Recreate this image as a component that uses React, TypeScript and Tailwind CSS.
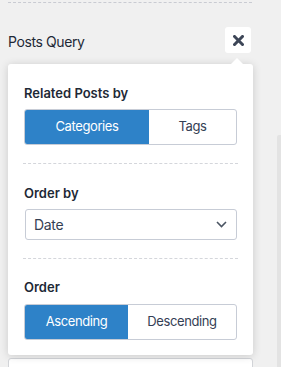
import React, { useState } from 'react';

const SEG = 'flex-1 h-full flex items-center justify-center text-[13px] tracking-[-0.4px]';

function Separator() {
  return <div className="-mx-px border-t border-dashed border-[#d4d6db]" />;
}

function Heading({ children }: { children: React.ReactNode }) {
  return <div className="text-[13px] leading-[16px] font-semibold text-[#1e2936]">{children}</div>;
}

export default function App() {
  const [relBy, setRelBy] = useState<'categories' | 'tags'>('categories');
  const [order, setOrder] = useState<'asc' | 'desc'>('asc');

  return (
    <div className="relative w-[281px] h-[367px] overflow-hidden bg-[#f0f0f0] font-['Inter',sans-serif]">
      <div className="ml-2 mt-[2px] w-[244px] border-t border-dashed border-[#c9cbd2]" />

      <div className="mt-6 ml-2 w-[243px] flex items-center justify-between">
        <span className="mt-[3px] text-[14px] tracking-[-0.4px] text-[#1e2936]">Posts Query</span>
        <button className="w-[26px] h-[26px] bg-white rounded-[3px] flex items-center justify-center">
          <svg width="11" height="11" viewBox="0 0 11 11">
            <path d="M1.5 1.5 L9.5 9.5 M9.5 1.5 L1.5 9.5" stroke="#3d4657" strokeWidth="3" strokeLinecap="square" />
          </svg>
        </button>
      </div>

      <div className="relative mt-[11px] ml-2 w-[245px] bg-white rounded-[3px] shadow-[0_1px_9px_rgba(0,0,0,0.16)] px-4 pt-[21px] pb-[15px]">
        <div className="absolute -top-[6px] left-[223px] w-0 h-0 border-l-[6px] border-r-[6px] border-b-[6px] border-l-transparent border-r-transparent border-b-white" />

        <Heading>Related Posts by</Heading>
        <div className="mt-2 h-[36px] flex rounded-[3px] border border-[#c7ccd6] overflow-hidden">
          <button onClick={() => setRelBy('categories')} className={SEG + (relBy === 'categories' ? ' bg-[#2e82c8] text-white' : ' text-[#344054]') + ' w-[124px] flex-none'}>Categories</button>
          <button onClick={() => setRelBy('tags')} className={SEG + (relBy === 'tags' ? ' bg-[#2e82c8] text-white' : ' text-[#344054]')}>Tags</button>
        </div>

        <div className="mt-[18px]"><Separator /></div>

        <div className="mt-[21px]"><Heading>Order by</Heading></div>
        <div className="mt-2 ml-px h-[31px] flex items-center justify-between rounded-[3px] border border-[#c7ccd6] pl-[8px] pr-[9px]">
          <span className="text-[14px] tracking-[-0.3px] text-[#344054]">Date</span>
          <svg width="11" height="7" viewBox="0 0 11 7">
            <path d="M1 1 L5.5 5.5 L10 1" fill="none" stroke="#4b5563" strokeWidth="1.6" />
          </svg>
        </div>

        <div className="mt-[18px]"><Separator /></div>

        <div className="mt-[20px]"><Heading>Order</Heading></div>
        <div className="mt-[9px] h-[36px] flex rounded-[3px] border border-[#c7ccd6] overflow-hidden">
          <button onClick={() => setOrder('asc')} className={SEG + (order === 'asc' ? ' bg-[#2e82c8] text-white' : ' text-[#344054]') + ' w-[103px] flex-none'}>Ascending</button>
          <button onClick={() => setOrder('desc')} className={SEG + (order === 'desc' ? ' bg-[#2e82c8] text-white' : ' text-[#344054]')}>Descending</button>
        </div>
      </div>

      <div className="mt-[3px] ml-2 w-[245px] h-[20px] bg-white border border-[#d2d4d8] rounded-t-[3px]" />

      <div className="absolute right-0 top-[135px] bottom-0 w-[4px] bg-[#e3e3e3] rounded-tl-[2px]" />
    </div>
  );
}
